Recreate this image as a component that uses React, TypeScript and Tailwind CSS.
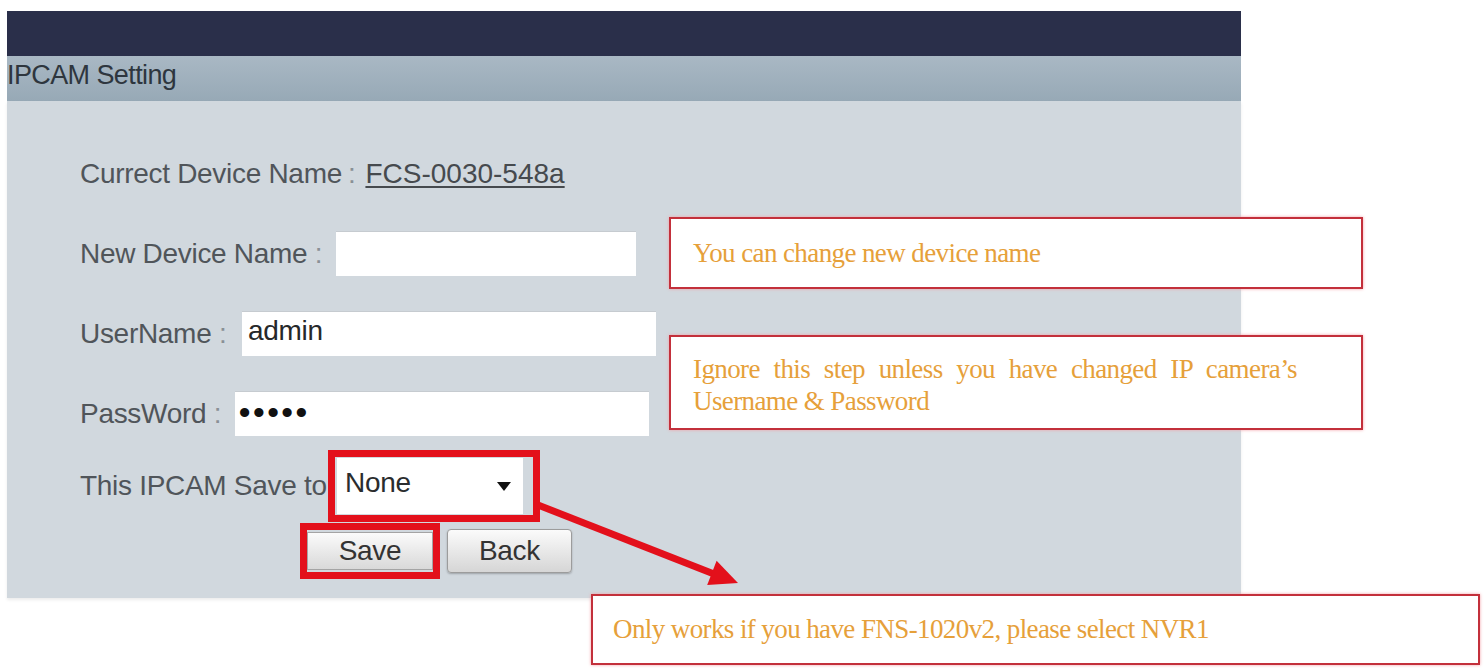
import React from "react";

const sans = { fontFamily: '"Liberation Sans", Arial, sans-serif' };
const serif = { fontFamily: '"Liberation Serif", "Times New Roman", serif' };

const Note = ({ className, children }: { className: string; children: React.ReactNode }) => (
  <div
    className={`absolute bg-white border-2 border-[#c3303b] shadow-[0_0_3px_#f3a0a8] text-[27px] tracking-[-0.6px] text-[#e6a03a] ${className}`}
    style={serif}
  >
    {children}
  </div>
);

const App = () => {
  return (
    <div className="relative w-[1484px] h-[668px] bg-white overflow-hidden" style={sans}>
      {/* Panel */}
      <div className="ml-[7px] pt-[11px] w-[1234px]">
        <div className="h-[45px] bg-[#2a2f4a]" />
        <div className="h-[45px] bg-gradient-to-b from-[#a9b8c4] to-[#97a9b6] flex items-center pb-[6px]">
          <span className="text-[27px] tracking-[-0.6px] text-[#2e363e]">IPCAM Setting</span>
        </div>
        <div className="h-[497px] bg-[#d1d8de] pl-[73px] pt-[53px] text-[28px] tracking-[-0.3px] text-[#50555a] shadow-[0_2px_3px_rgba(0,0,0,0.08)]">
          {/* Current name */}
          <div className="h-[40px] flex items-center whitespace-nowrap">
            <span>Currect Device Name</span>
            <span className="text-[#8a9096] ml-[6px] mr-[10px]">:</span>
            <span className="underline underline-offset-[3px] tracking-normal text-[#464a4e]">FCS-0030-548a</span>
          </div>

          {/* New name */}
          <div className="mt-[37px] h-[45px] flex items-center">
            <span className="w-[256px] whitespace-nowrap">
              New Device Name <span className="text-[#8a9096]">:</span>
            </span>
            <div className="w-[300px] h-[45px] bg-white border-t border-[#c6cbd0]" />
          </div>

          {/* Username */}
          <div className="mt-[35px] h-[45px] flex items-center">
            <span className="w-[162px] whitespace-nowrap">
              UserName <span className="text-[#8a9096]">:</span>
            </span>
            <div className="w-[414px] h-[45px] bg-white border-t border-[#c6cbd0] flex items-center pl-[6px] pb-[6px] text-[#26282a]">
              admin
            </div>
          </div>

          {/* Password */}
          <div className="mt-[35px] h-[45px] flex items-center">
            <span className="w-[155px] whitespace-nowrap">
              PassWord <span className="text-[#8a9096]">:</span>
            </span>
            <div className="w-[414px] h-[45px] bg-white border-t border-[#c6cbd0] flex items-center pl-[4px] pb-[4px] text-[32px] font-bold text-[#111] tracking-[3px]">
              •••••
            </div>
          </div>

          {/* Save to */}
          <div className="mt-[14px] h-[72px] flex items-center">
            <span className="w-[248px] whitespace-nowrap">This IPCAM Save to</span>
            <div className="border-[7px] border-[#e3101b] py-[1px] pl-[2px] pr-[10px]">
              <div className="w-[186px] h-[56px] bg-white flex items-center justify-between pl-[8px] pr-[12px] pb-[6px] text-[#2a2c2e]">
                <span>None</span>
                <svg width="14" height="9" viewBox="0 0 14 9" className="mt-[6px]">
                  <path d="M0 0h14L7 9z" fill="#111" />
                </svg>
              </div>
            </div>
          </div>

          {/* Buttons */}
          <div className="mt-[1px] ml-[220px] flex items-center">
            <div className="border-[7px] border-[#e3101b]">
              <button className="w-[126px] h-[38px] bg-gradient-to-b from-[#fbfbfb] to-[#d9d9d9] border border-[#a4a4a4] text-[#333] text-[28px] leading-none">
                Save
              </button>
            </div>
            <button className="ml-[7px] w-[125px] h-[44px] rounded-[4px] bg-gradient-to-b from-[#fbfbfb] to-[#d6d6d6] border border-[#9c9c9c] shadow-[0_1px_2px_rgba(0,0,0,0.25)] text-[#333] text-[28px] leading-none">
              Back
            </button>
          </div>
        </div>
      </div>

      {/* Arrow */}
      <svg className="absolute left-0 top-0 pointer-events-none" width="1484" height="668">
        <line x1="538" y1="505" x2="714" y2="574" stroke="#e3101b" strokeWidth="7" />
        <polygon points="738,583 716.6,560.7 707.2,584.9" fill="#e3101b" />
      </svg>

      {/* Notes */}
      <Note className="left-[669px] top-[217px] w-[694px] h-[72px] flex items-center pl-[22px]">
        You can change new device name
      </Note>
      <Note className="left-[669px] top-[335px] w-[694px] h-[95px] pl-[22px] pr-[64px] pt-[16px] leading-[32px]">
        <span className="block text-justify [text-align-last:justify]">
          Ignore this step unless you have changed IP camera’s
        </span>
        <span className="block">Username &amp; Password</span>
      </Note>
      <Note className="left-[591px] top-[594px] w-[889px] h-[71px] flex items-center pl-[20px]">
        Only works if you have FNS-1020v2, please select NVR1
      </Note>
    </div>
  );
};

export default App;
